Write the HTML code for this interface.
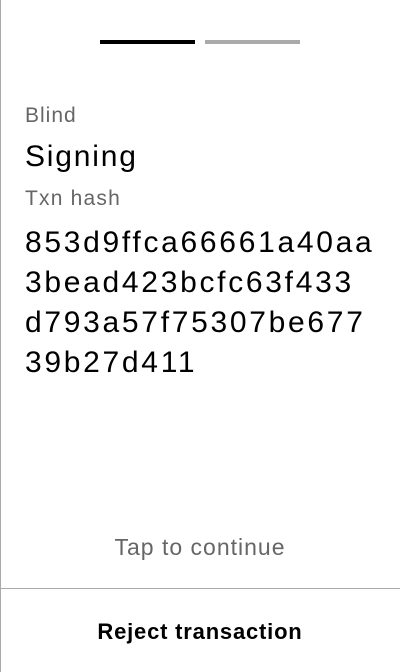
<!DOCTYPE html>
<html><head><style>
body{margin:0;width:400px;height:672px;background:#fff;font-family:"Liberation Sans",sans-serif;position:relative;overflow:hidden}
.lb{position:absolute;left:0;top:0;width:1px;height:672px;background:#aaa}
.bar{position:absolute;top:40px;height:4px;width:95px}
.t{position:absolute;left:25px;white-space:nowrap}
</style></head><body>
<div class="lb"></div>
<div class="bar" style="left:100px;background:#000"></div>
<div class="bar" style="left:205px;background:#aaa"></div>
<div class="t" style="top:104px;font-size:21px;color:#666;letter-spacing:1px">Blind</div>
<div class="t" style="top:140px;font-size:30px;color:#000;letter-spacing:1.8px">Signing</div>
<div class="t" style="top:187px;font-size:21px;color:#666;letter-spacing:1.2px">Txn hash</div>
<div class="t" style="top:223px;font-size:30px;line-height:40px;color:#000;letter-spacing:2.7px">853d9ffca66661a40aa<br>3bead423bcfc63f433<br>d793a57f75307be677<br>39b27d411</div>
<div style="position:absolute;top:534px;left:0;width:400px;text-align:center;font-size:23px;color:#666;letter-spacing:1px">Tap to continue</div>
<div style="position:absolute;top:588px;left:0;width:400px;height:1px;background:#aaa"></div>
<div style="position:absolute;top:619px;left:0;width:400px;text-align:center;font-size:22px;font-weight:bold;color:#000;letter-spacing:0.8px">Reject transaction</div>
</body></html>
